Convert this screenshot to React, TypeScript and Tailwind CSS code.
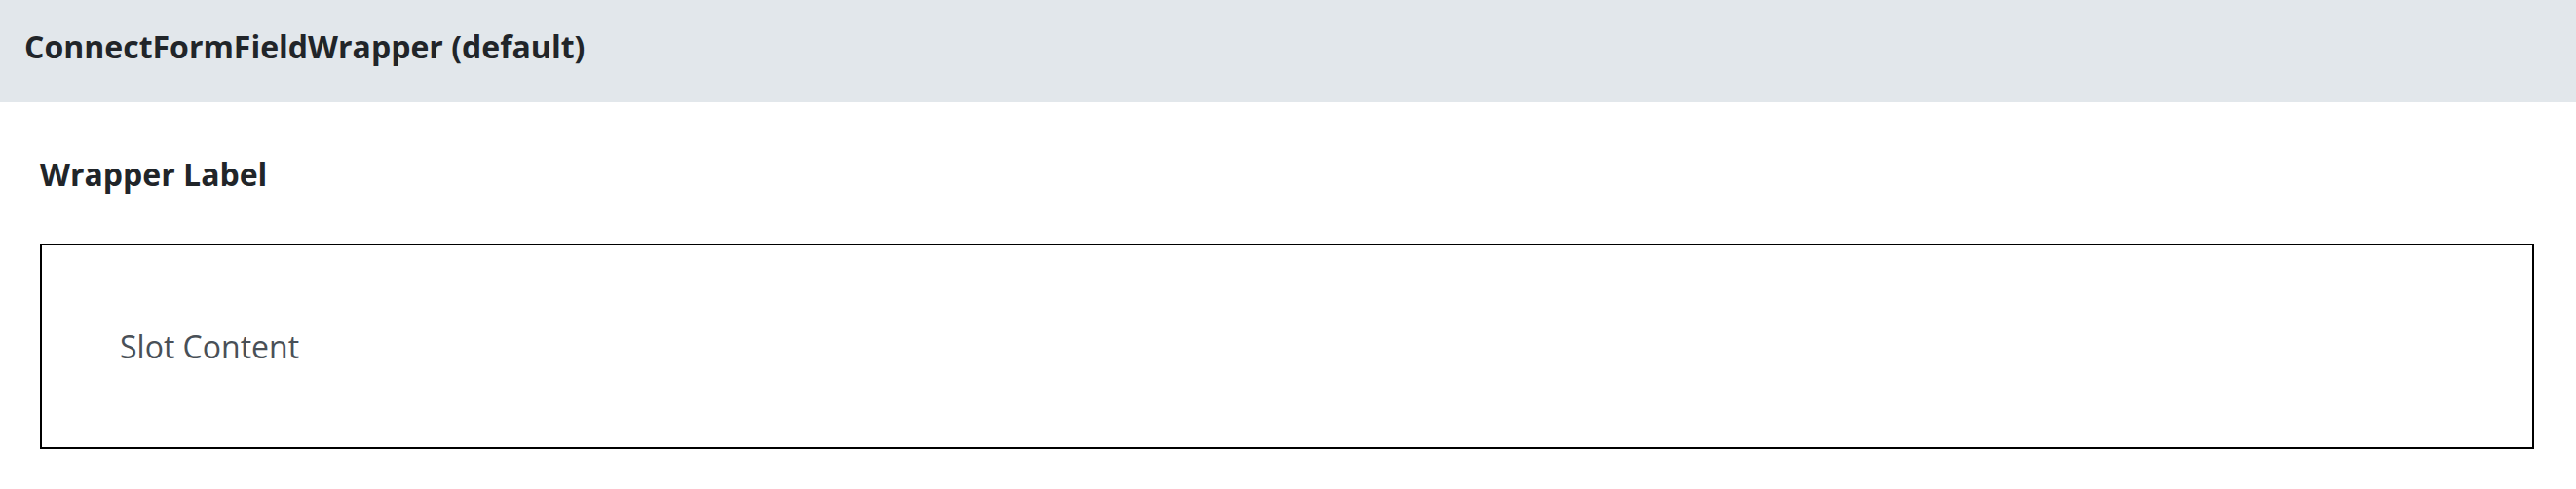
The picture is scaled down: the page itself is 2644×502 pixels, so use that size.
export default function App() {
  return (
    <div className="w-[2644px] h-[502px] bg-white" style={{ fontFamily: '"Open Sans", sans-serif' }}>
      <div className="h-[105px] bg-[#e2e7eb] pl-[25px] pt-[24px]">
        <h1 className="text-[32px] leading-[48px] font-bold text-[#212529]">ConnectFormFieldWrapper (default)</h1>
      </div>
      <div className="pl-[41px] pt-[50px]">
        <div className="text-[32px] leading-[48px] font-bold text-[#212529]">Wrapper Label</div>
        <div className="mt-[47px] w-[2560px] h-[211px] border-2 border-black px-[80px] pt-[80px]">
          <div className="text-[32px] leading-[47px] text-[#495057]">Slot Content</div>
        </div>
      </div>
    </div>
  );
}
